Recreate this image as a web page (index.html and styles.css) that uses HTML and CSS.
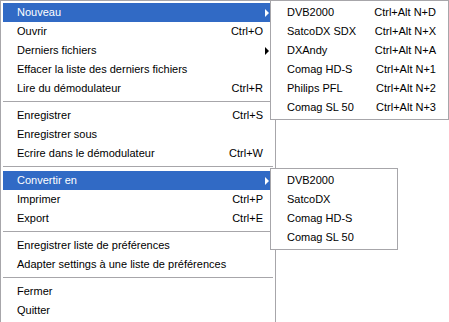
FILE: index.html
```html
<!DOCTYPE html>
<html>
<head>
<meta charset="utf-8">
<link rel="stylesheet" href="styles.css">
</head>
<body>
<div class="menu main">
  <div class="item active"><span class="label">Nouveau</span><span class="key"></span><span class="sub"></span></div>
  <div class="item"><span class="label">Ouvrir</span><span class="key">Ctrl+O</span><span class="sub none"></span></div>
  <div class="item"><span class="label">Derniers fichiers</span><span class="key"></span><span class="sub"></span></div>
  <div class="item"><span class="label">Effacer la liste des derniers fichiers</span><span class="key"></span><span class="sub none"></span></div>
  <div class="item"><span class="label">Lire du démodulateur</span><span class="key">Ctrl+R</span><span class="sub none"></span></div>
  <div class="sep"></div>
  <div class="item"><span class="label">Enregistrer</span><span class="key">Ctrl+S</span><span class="sub none"></span></div>
  <div class="item"><span class="label">Enregistrer sous</span><span class="key"></span><span class="sub none"></span></div>
  <div class="item"><span class="label">Ecrire dans le démodulateur</span><span class="key">Ctrl+W</span><span class="sub none"></span></div>
  <div class="sep"></div>
  <div class="item active"><span class="label">Convertir en</span><span class="key"></span><span class="sub"></span></div>
  <div class="item"><span class="label">Imprimer</span><span class="key">Ctrl+P</span><span class="sub none"></span></div>
  <div class="item"><span class="label">Export</span><span class="key">Ctrl+E</span><span class="sub none"></span></div>
  <div class="sep"></div>
  <div class="item"><span class="label">Enregistrer liste de préférences</span><span class="key"></span><span class="sub none"></span></div>
  <div class="item"><span class="label">Adapter settings à une liste de préférences</span><span class="key"></span><span class="sub none"></span></div>
  <div class="sep"></div>
  <div class="item"><span class="label">Fermer</span><span class="key"></span><span class="sub none"></span></div>
  <div class="item"><span class="label">Quitter</span><span class="key"></span><span class="sub none"></span></div>
</div>

<div class="menu submenu sub-new">
  <div class="item"><span class="label">DVB2000</span><span class="key">Ctrl+Alt N+D</span><span class="sub none"></span></div>
  <div class="item"><span class="label">SatcoDX SDX</span><span class="key">Ctrl+Alt N+X</span><span class="sub none"></span></div>
  <div class="item"><span class="label">DXAndy</span><span class="key">Ctrl+Alt N+A</span><span class="sub none"></span></div>
  <div class="item"><span class="label">Comag HD-S</span><span class="key">Ctrl+Alt N+1</span><span class="sub none"></span></div>
  <div class="item"><span class="label">Philips PFL</span><span class="key">Ctrl+Alt N+2</span><span class="sub none"></span></div>
  <div class="item"><span class="label">Comag SL 50</span><span class="key">Ctrl+Alt N+3</span><span class="sub none"></span></div>
</div>

<div class="menu submenu sub-convert">
  <div class="item"><span class="label">DVB2000</span><span class="key"></span><span class="sub none"></span></div>
  <div class="item"><span class="label">SatcoDX</span><span class="key"></span><span class="sub none"></span></div>
  <div class="item"><span class="label">Comag HD-S</span><span class="key"></span><span class="sub none"></span></div>
  <div class="item"><span class="label">Comag SL 50</span><span class="key"></span><span class="sub none"></span></div>
</div>
</body>
</html>
```

FILE: styles.css
```css
html, body {
  margin: 0;
  padding: 0;
  background: #ffffff;
}
body {
  position: relative;
  width: 449px;
  height: 322px;
  overflow: hidden;
  font-family: "Liberation Sans", Arial, sans-serif;
  font-size: 11px;
  color: #000000;
}
.menu {
  background: #ffffff;
  border: 1px solid #a7a6aa;
  padding: 2px;
  box-sizing: border-box;
}
.main {
  width: 276px;
  height: 323px;
}
.submenu {
  position: absolute;
  left: 270px;
}
.sub-new {
  top: 0;
  width: 179px;
  height: 120px;
}
.sub-convert {
  top: 168px;
  width: 128px;
  height: 250px;
  height: 82px;
}
.item {
  display: flex;
  align-items: center;
  height: 19px;
  line-height: 19px;
  padding-left: 14px;
  white-space: nowrap;
}
.item.active {
  background: #316ac5;
  color: #ffffff;
}
.label {
  flex: 1;
}
.key {
  text-align: right;
}
.sub {
  width: 10px;
  height: 19px;
  position: relative;
  flex: none;
}
.sub::after {
  content: "";
  position: absolute;
  left: 2px;
  top: 6px;
  border-left: 4px solid #000000;
  border-top: 4px solid transparent;
  border-bottom: 4px solid transparent;
}
.item.active .sub::after {
  border-left-color: #ffffff;
}
.sub.none::after {
  display: none;
}
.sep {
  height: 8px;
  box-sizing: border-box;
  padding-top: 3px;
}
.sep::before {
  content: "";
  display: block;
  height: 1px;
  background: #a7a6aa;
}
```
